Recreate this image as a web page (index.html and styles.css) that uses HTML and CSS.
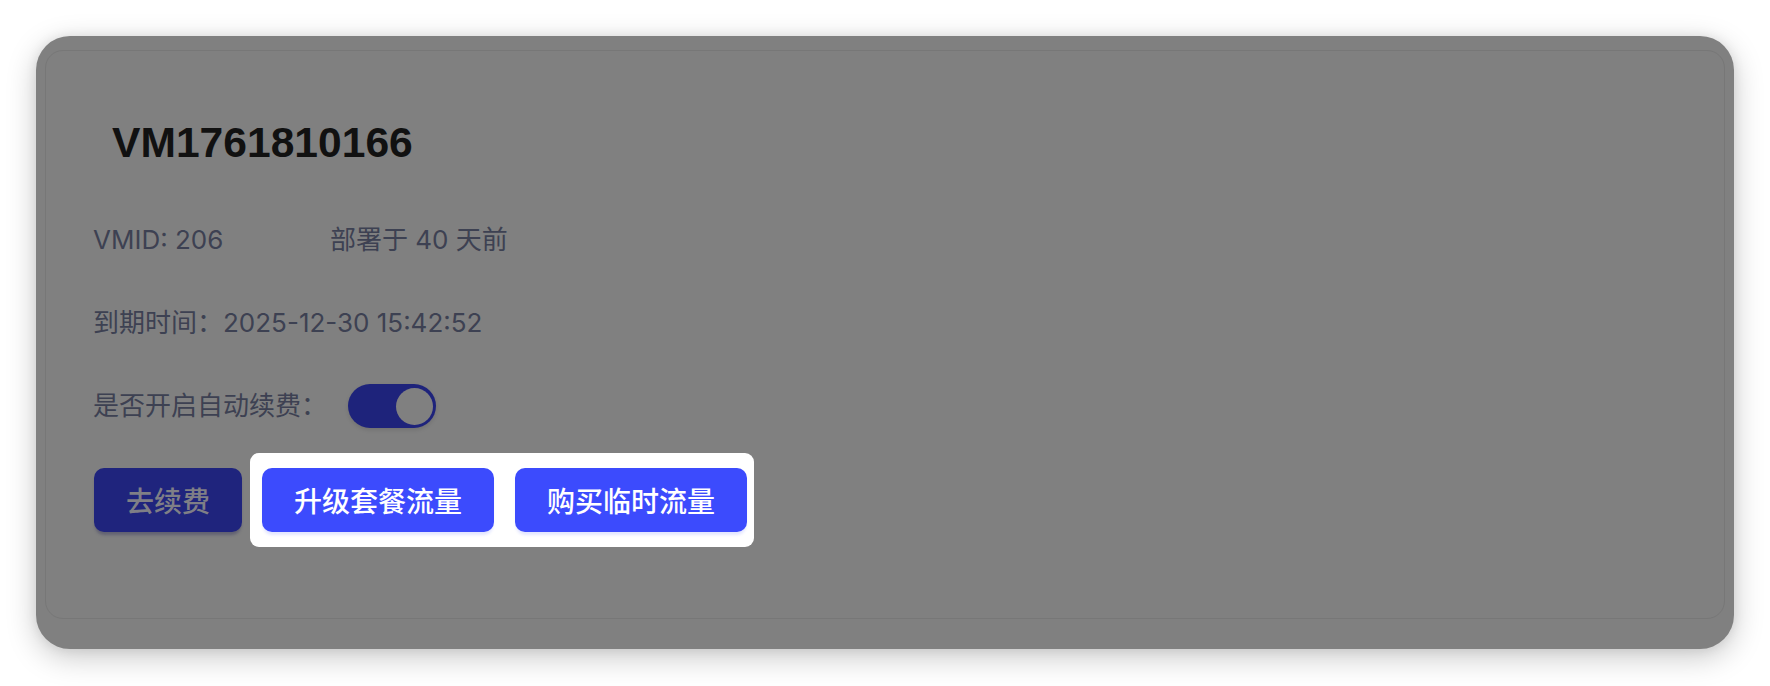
FILE: index.html
```html
<!DOCTYPE html>
<html lang="zh-CN">
<head>
<meta charset="utf-8">
<title>VM1761810166</title>
<link rel="stylesheet" href="styles.css">
</head>
<body>
<div class="window">
  <div class="card">
    <h1 class="title">VM1761810166</h1>
    <div class="row info-row">
      <span class="vmid">VMID: 206</span>
      <span>部署于 40 天前</span>
    </div>
    <div class="row expire-row">到期时间：2025-12-30 15:42:52</div>
    <div class="row toggle-row">
      <span>是否开启自动续费：</span>
      <span class="switch"><span class="knob"></span></span>
    </div>
    <div class="actions">
      <button class="btn btn-dark">去续费</button>
      <div class="spotlight">
        <button class="btn btn-blue">升级套餐流量</button>
        <button class="btn btn-blue">购买临时流量</button>
      </div>
    </div>
  </div>
</div>
</body>
</html>
```

FILE: styles.css
```css
html, body {
  margin: 0;
  padding: 0;
  background: #ffffff;
}

body {
  width: 1770px;
  height: 686px;
  overflow: hidden;
  font-family: "Inter", "Noto Sans CJK SC", sans-serif;
}

.window {
  margin: 36px 36px 0 36px;
  height: 613px;
  box-sizing: border-box;
  padding: 14px 9px 30px 9px;
  background: #808080;
  border-radius: 34px;
  box-shadow: 0 8px 30px rgba(0, 0, 0, 0.22), 0 0 12px rgba(0, 0, 0, 0.08);
}

.card {
  height: 100%;
  box-sizing: border-box;
  border: 1px solid #777777;
  border-radius: 18px;
  padding: 66px 0 0 47px;
  display: flex;
  flex-direction: column;
  align-items: flex-start;
}

.title {
  margin: 0 0 0 19px;
  font-family: "Liberation Sans", "Noto Sans CJK SC", sans-serif;
  font-size: 42.6px;
  line-height: 50px;
  font-weight: 700;
  color: #111111;
}

.row {
  font-size: 26px;
  line-height: 32px;
  color: #3d4152;
  display: flex;
  align-items: center;
}

.info-row {
  margin-top: 57px;
}

.vmid {
  width: 237px;
}

.expire-row {
  margin-top: 51px;
}

.toggle-row {
  margin-top: 45px;
  height: 44px;
  gap: 21px;
}

.switch {
  width: 88px;
  height: 44px;
  box-sizing: border-box;
  border-radius: 22px;
  background: #1e237b;
  display: flex;
  align-items: center;
  justify-content: flex-end;
  padding-right: 3px;
  box-shadow: 0 2px 4px rgba(0, 0, 0, 0.12);
}

.knob {
  width: 37px;
  height: 37px;
  border-radius: 50%;
  background: #808080;
}

.actions {
  margin-top: 40px;
  margin-left: 1px;
  display: flex;
  align-items: center;
}

.btn {
  height: 64px;
  padding: 0 32px;
  border: none;
  border-radius: 10px;
  font-family: "Noto Sans CJK SC", sans-serif;
  font-size: 28px;
  font-weight: 500;
  line-height: 64px;
  cursor: pointer;
}

.btn-dark {
  background: #1f247d;
  color: #7f7f86;
  box-shadow: 0 4px 3px -1px rgba(40, 40, 90, 0.35);
}

.spotlight {
  margin: -15px 0 -15px 8px;
  padding: 15px 7px 15px 12px;
  background: #ffffff;
  border-radius: 9px;
  display: flex;
  gap: 21px;
}

.btn-blue {
  background: #3c4bfd;
  color: #ffffff;
  box-shadow: 0 4px 3px -1px rgba(60, 75, 253, 0.14);
}
```
